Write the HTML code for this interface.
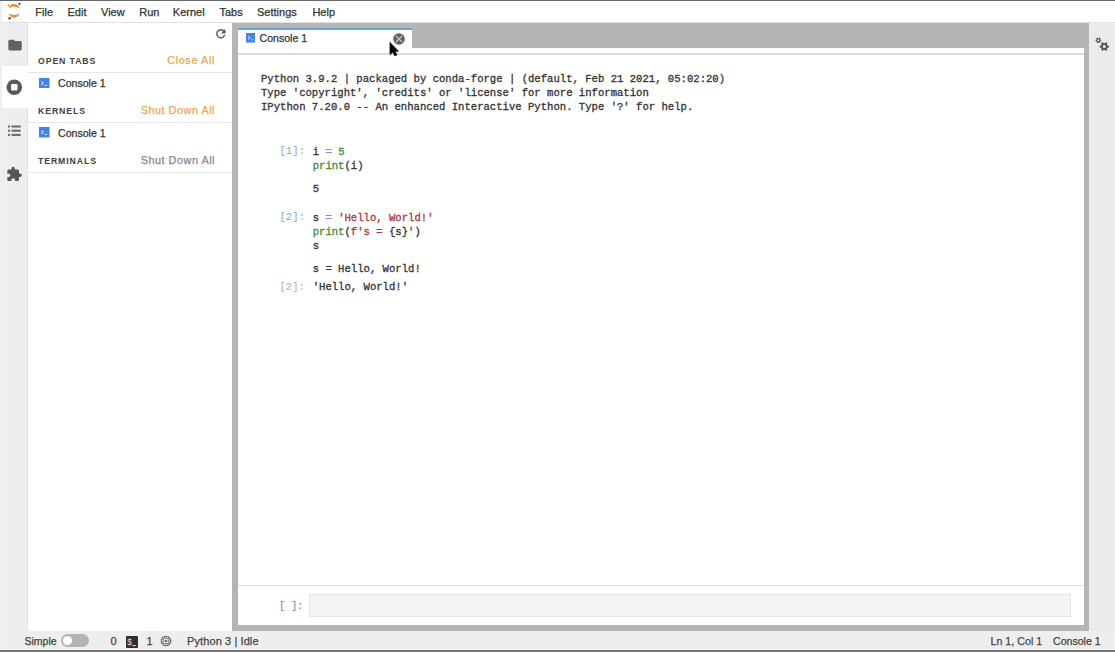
<!DOCTYPE html>
<html><head><meta charset="utf-8">
<style>
*{margin:0;padding:0;box-sizing:border-box}
html,body{width:1115px;height:652px;overflow:hidden;background:#fff}
body{position:relative;font-family:"Liberation Sans",sans-serif;color:#333}
.a{position:absolute}
.ui{font-size:11px;white-space:nowrap;line-height:1;-webkit-text-stroke:0.25px currentColor}
.mono{font-family:"Liberation Mono",monospace;font-size:10.6px;white-space:pre;line-height:13.78px;color:#333;-webkit-text-stroke:0.3px currentColor}
.hdr{font-size:9.8px;font-weight:bold;letter-spacing:1px;color:#404040;white-space:nowrap;line-height:1;transform:scaleX(0.89);transform-origin:0 0}
.orange{color:#eea64e}
.gray{color:#888}
.item{font-size:10.8px;color:#333}
.st{font-size:11px;color:#444}
.op{color:#9b6ff7}.num{color:#3f8a36}.bi{color:#428a36}.str{color:#b3303c}
.pin{color:#8ca6c4;-webkit-text-stroke:0}.pout{color:#c4a49b;-webkit-text-stroke:0}

</style></head><body>
<!-- top line -->
<div class="a" style="left:0;top:0;width:1115px;height:1px;background:#666"></div>
<!-- left edge -->
<div class="a" style="left:0;top:1px;width:2px;height:650px;background:#efefef"></div>
<!-- menubar -->
<div class="a" style="left:2px;top:1px;width:1113px;height:21px;background:#fff"></div>
<div class="a" style="left:2px;top:22px;width:1113px;height:1px;background:#e0e0e0"></div>
<svg class="a" style="left:0;top:0" width="28" height="22" viewBox="0 0 28 22">
<path fill="#e98a3c" d="M8.3 8.4 C9.3 5.6 11.5 4.1 14.1 4.1 C16.7 4.1 18.9 5.6 19.9 8.4 C18.4 7.3 16.4 6.8 14.1 6.8 C11.8 6.8 9.8 7.3 8.3 8.4Z"/>
<path fill="#e98a3c" d="M8.3 13.3 C9.3 16.1 11.5 17.7 14.1 17.7 C16.7 17.7 18.9 16.1 19.9 13.3 C18.4 14.4 16.4 15 14.1 15 C11.8 15 9.8 14.4 8.3 13.3Z"/>
<circle cx="19.5" cy="3.9" r="1.15" fill="#555"/><circle cx="8.4" cy="5.3" r="0.75" fill="#666"/><circle cx="9.6" cy="18.3" r="1.25" fill="#555"/>
</svg>
<div id="menu">
<span class="a ui" style="left:35.3px;top:7.1px">File</span>
<span class="a ui" style="left:67.5px;top:7.1px">Edit</span>
<span class="a ui" style="left:101px;top:7.1px">View</span>
<span class="a ui" style="left:139.2px;top:7.1px">Run</span>
<span class="a ui" style="left:172.8px;top:7.1px">Kernel</span>
<span class="a ui" style="left:219.5px;top:7.1px">Tabs</span>
<span class="a ui" style="left:257px;top:7.1px">Settings</span>
<span class="a ui" style="left:312.4px;top:7.1px">Help</span>
</div>

<!-- left sidebar -->
<div class="a" style="left:2px;top:23px;width:26px;height:608px;background:#eeeeee"></div>
<div class="a" style="left:2px;top:66px;width:26px;height:42px;background:#fff"></div>

<!-- left panel -->
<div class="a" style="left:28px;top:23px;width:204px;height:608px;background:#fff"></div>

<!-- main gray -->
<div class="a" style="left:232px;top:23px;width:857px;height:608px;background:#b5b5b5"></div>
<div class="a" style="left:238px;top:48px;width:846px;height:577px;background:#fff"></div>
<div class="a" style="left:238px;top:53px;width:846px;height:2px;background:#dbdbdb"></div>
<!-- tab -->
<div class="a" style="left:238px;top:28px;width:174px;height:25px;background:#fff"></div>
<div class="a" style="left:238px;top:28px;width:174px;height:2px;background:#6f9fd2"></div>

<!-- right sidebar -->
<div class="a" style="left:1089px;top:23px;width:26px;height:608px;background:#ebebeb"></div>

<!-- status bar -->
<div class="a" style="left:2px;top:631px;width:1113px;height:19px;background:#eeeeee"></div>
<div class="a" style="left:0;top:650px;width:1115px;height:2px;background:#777"></div>


<!-- sidebar icons -->
<svg class="a" style="left:6.7px;top:37px" width="16.08" height="16.08" viewBox="0 0 24 24"><path fill="#616161" d="M10 4H4c-1.1 0-1.99.9-1.99 2L2 18c0 1.1.9 2 2 2h16c1.1 0 2-.9 2-2V8c0-1.1-.9-2-2-2h-8l-2-2z"/></svg>
<svg class="a" style="left:5.05px;top:78.3px" width="18.6" height="18.6" viewBox="0 0 24 24"><circle cx="12" cy="12" r="10" fill="#595959"/><rect x="7.9" y="7.9" width="8.2" height="8.2" rx="1.3" fill="#fff"/></svg>
<svg class="a" style="left:0;top:115px" width="28" height="30" viewBox="0 0 28 30"><g fill="#666"><rect x="8" y="10.5" width="2" height="2"/><rect x="11.5" y="10.5" width="9.2" height="2"/><rect x="8" y="14.7" width="2" height="2"/><rect x="11.5" y="14.7" width="9.2" height="2"/><rect x="8" y="18.9" width="2" height="2"/><rect x="11.5" y="18.9" width="9.2" height="2"/></g></svg>
<svg class="a" style="left:6.13px;top:166px" width="16.44" height="16.44" viewBox="0 0 24 24"><path fill="#575757" d="M20.5 11H19V7c0-1.1-.9-2-2-2h-4V3.5C13 2.12 11.88 1 10.5 1S8 2.12 8 3.5V5H4c-1.1 0-1.99.9-1.99 2v3.8H3.5c1.49 0 2.7 1.21 2.7 2.7s-1.21 2.7-2.7 2.7H2V20c0 1.1.9 2 2 2h3.8v-1.5c0-1.49 1.21-2.7 2.7-2.7 1.49 0 2.7 1.21 2.7 2.7V22H17c1.1 0 2-.9 2-2v-4h1.5c1.38 0 2.5-1.12 2.5-2.5S21.88 11 20.5 11z"/></svg>
<div class="a" style="left:27px;top:23px;width:1px;height:43px;background:#e2e2e2"></div>
<div class="a" style="left:27px;top:108px;width:1px;height:523px;background:#e2e2e2"></div>

<!-- left panel content -->
<svg class="a" style="left:213.6px;top:27px" width="13.6" height="13.6" viewBox="0 0 24 24"><path fill="#555" stroke="#555" stroke-width="0.6" d="M17.65 6.35C16.2 4.9 14.21 4 12 4c-4.42 0-7.99 3.58-7.99 8s3.57 8 7.99 8c3.73 0 6.84-2.55 7.73-6h-2.08c-.82 2.33-3.04 4-5.65 4-3.31 0-6-2.69-6-6s2.69-6 6-6c1.66 0 3.14.69 4.22 1.78L13 11h7V4l-2.35 2.35z"/></svg>
<span class="a hdr" style="left:38px;top:56px">OPEN TABS</span>
<span class="a ui orange" style="right:900px;top:55.3px;font-size:10.9px;letter-spacing:0.6px">Close All</span>
<div class="a" style="left:28px;top:72px;width:204px;height:1px;background:#e6e6e6"></div>
<svg class="a cicon" style="left:39.4px;top:77.6px" width="10.5" height="10.5" viewBox="20 19.8 160 160"><path fill="#4285e6" d="M20 19.8h160v159.9H20z"/><path fill="#cfe0fa" d="M105 127.3h40v12.8h-40zM51.1 77L74 99.9l-23.3 23.3 10.5 10.5 23.3-23.3L95 99.9 84.5 89.4 61.6 66.5z"/></svg>
<span class="a ui item" style="left:58px;top:78.2px;font-size:10.6px">Console 1</span>
<span class="a hdr" style="left:38px;top:106px">KERNELS</span>
<span class="a ui orange" style="right:900px;top:105.3px;font-size:10.9px;letter-spacing:0.5px">Shut Down All</span>
<div class="a" style="left:28px;top:122px;width:204px;height:1px;background:#e6e6e6"></div>
<svg class="a cicon" style="left:39.3px;top:127.3px" width="10.5" height="10.5" viewBox="20 19.8 160 160"><path fill="#4285e6" d="M20 19.8h160v159.9H20z"/><path fill="#cfe0fa" d="M105 127.3h40v12.8h-40zM51.1 77L74 99.9l-23.3 23.3 10.5 10.5 23.3-23.3L95 99.9 84.5 89.4 61.6 66.5z"/></svg>
<span class="a ui item" style="left:58px;top:128.2px;font-size:10.6px">Console 1</span>
<span class="a hdr" style="left:38px;top:155.7px">TERMINALS</span>
<span class="a ui gray" style="right:900px;top:155.3px;font-size:10.9px;letter-spacing:0.5px">Shut Down All</span>
<div class="a" style="left:28px;top:172px;width:204px;height:1px;background:#e6e6e6"></div>

<!-- tab content -->
<svg class="a cicon" style="left:245.7px;top:33px" width="9.6" height="9.6" viewBox="20 19.8 160 160"><path fill="#4285e6" d="M20 19.8h160v159.9H20z"/><path fill="#cfe0fa" d="M105 127.3h40v12.8h-40zM51.1 77L74 99.9l-23.3 23.3 10.5 10.5 23.3-23.3L95 99.9 84.5 89.4 61.6 66.5z"/></svg>
<span class="a ui item" style="left:259.5px;top:33.4px;font-size:10.6px">Console 1</span>
<svg class="a" style="left:393.3px;top:32.6px" width="12" height="12" viewBox="0 0 12 12"><circle cx="6" cy="6" r="5.8" fill="#616161"/><path d="M2.9 2.9L9.1 9.1M9.1 2.9L2.9 9.1" stroke="#cfcfcf" stroke-width="1.25"/></svg>
<svg class="a" style="left:388px;top:41px" width="12" height="18" viewBox="0 0 12 18"><path d="M1.9 1.3 L1.9 13.6 L4.9 11.2 L6.6 14.9 L9 14 L7.3 10.4 L10.6 10.2 Z" fill="#000" stroke="#000" stroke-width="0.5" stroke-linejoin="round"/></svg>

<!-- console banner -->
<div class="a mono" style="left:261px;top:73px">Python 3.9.2 | packaged by conda-forge | (default, Feb 21 2021, 05:02:20)
Type 'copyright', 'credits' or 'license' for more information
IPython 7.20.0 -- An enhanced Interactive Python. Type '?' for help.</div>

<div class="a mono pin" style="left:279.5px;top:145px">[1]:</div>
<div class="a mono" style="left:312.7px;top:145.8px">i <span class="op">=</span> <span class="num">5</span>
<span class="bi">print</span>(i)</div>
<div class="a mono" style="left:312.7px;top:182.5px">5</div>

<div class="a mono pin" style="left:279.5px;top:211.3px">[2]:</div>
<div class="a mono" style="left:312.7px;top:212.4px">s <span class="op">=</span> <span class="str">'Hello, World!'</span>
<span class="bi">print</span>(<span class="str">f's = </span>{s}<span class="str">'</span>)
s</div>
<div class="a mono" style="left:312.7px;top:263.2px">s = Hello, World!</div>
<div class="a mono pout" style="left:279.5px;top:280.5px">[2]:</div>
<div class="a mono" style="left:312.7px;top:281.3px">'Hello, World!'</div>

<!-- input area -->
<div class="a" style="left:238px;top:584.5px;width:846px;height:1.5px;background:#dcdcdc"></div>
<div class="a mono pin" style="left:279px;top:600px;color:#72839f;letter-spacing:-0.35px">[ ]:</div>
<div class="a" style="left:308.5px;top:593.5px;width:762.5px;height:23.5px;background:#f4f4f4;border:1px solid #e6e6e6"></div>

<!-- right sidebar gear -->
<svg class="a" style="left:1090px;top:32px" width="24" height="24" viewBox="0 0 24 24"><g transform="translate(8.4 8.3)" fill="#555"><circle r="2.1"/><rect x="-0.75" y="-2.8" width="1.5" height="1.4" transform="rotate(30)"/><rect x="-0.75" y="-2.8" width="1.5" height="1.4" transform="rotate(90)"/><rect x="-0.75" y="-2.8" width="1.5" height="1.4" transform="rotate(150)"/><rect x="-0.75" y="-2.8" width="1.5" height="1.4" transform="rotate(210)"/><rect x="-0.75" y="-2.8" width="1.5" height="1.4" transform="rotate(270)"/><rect x="-0.75" y="-2.8" width="1.5" height="1.4" transform="rotate(330)"/><circle r="0.95" fill="#ebebeb"/></g><g transform="translate(14.3 14.6)" fill="#555"><circle r="3.3"/><rect x="-1.0" y="-4.6" width="2.0" height="1.8" transform="rotate(30)"/><rect x="-1.0" y="-4.6" width="2.0" height="1.8" transform="rotate(90)"/><rect x="-1.0" y="-4.6" width="2.0" height="1.8" transform="rotate(150)"/><rect x="-1.0" y="-4.6" width="2.0" height="1.8" transform="rotate(210)"/><rect x="-1.0" y="-4.6" width="2.0" height="1.8" transform="rotate(270)"/><rect x="-1.0" y="-4.6" width="2.0" height="1.8" transform="rotate(330)"/><circle r="1.5" fill="#ebebeb"/></g></svg>
<!-- status bar content -->
<span class="a ui st" style="left:24.5px;top:635.8px;font-size:10.5px">Simple</span>
<div class="a" style="left:61px;top:634.2px;width:28.2px;height:13.2px;border-radius:7px;background:#b3b3b3"></div>
<div class="a" style="left:62.6px;top:635.8px;width:9.6px;height:9.6px;border-radius:50%;background:#fff"></div>
<span class="a ui st" style="left:110.5px;top:636px">0</span>
<div class="a" style="left:126.4px;top:635.7px;width:11.9px;height:12.1px;background:#2e2e2e;border-radius:1px"></div>
<svg class="a" style="left:126.4px;top:635.7px" width="12" height="12" viewBox="0 0 12 12"><text x="1.2" y="9.3" font-family="Liberation Sans" font-size="8.5" fill="#ddd">$</text><rect x="6.3" y="9" width="3.6" height="1.1" fill="#ccc"/></svg>
<span class="a ui st" style="left:146.5px;top:636px">1</span>
<svg class="a" style="left:159.6px;top:635.2px" width="12" height="12" viewBox="0 0 12 12"><circle cx="6" cy="6" r="4.6" fill="none" stroke="#555" stroke-width="1.5" stroke-dasharray="1.6 0.5"/><rect x="3.4" y="3.4" width="5.2" height="5.2" rx="0.8" fill="none" stroke="#777" stroke-width="0.9"/><circle cx="6" cy="6" r="1.3" fill="#666"/></svg>
<span class="a ui st" style="left:187px;top:636px;letter-spacing:0.1px">Python 3 | Idle</span>
<span class="a ui st" style="left:990.5px;top:636px;font-size:10.7px">Ln 1, Col 1</span>
<span class="a ui st" style="left:1053px;top:636px;font-size:10.6px">Console 1</span>

<div class="a" style="left:1113.5px;top:23px;width:1.5px;height:627px;background:#f2f2f2"></div>
</body></html>
